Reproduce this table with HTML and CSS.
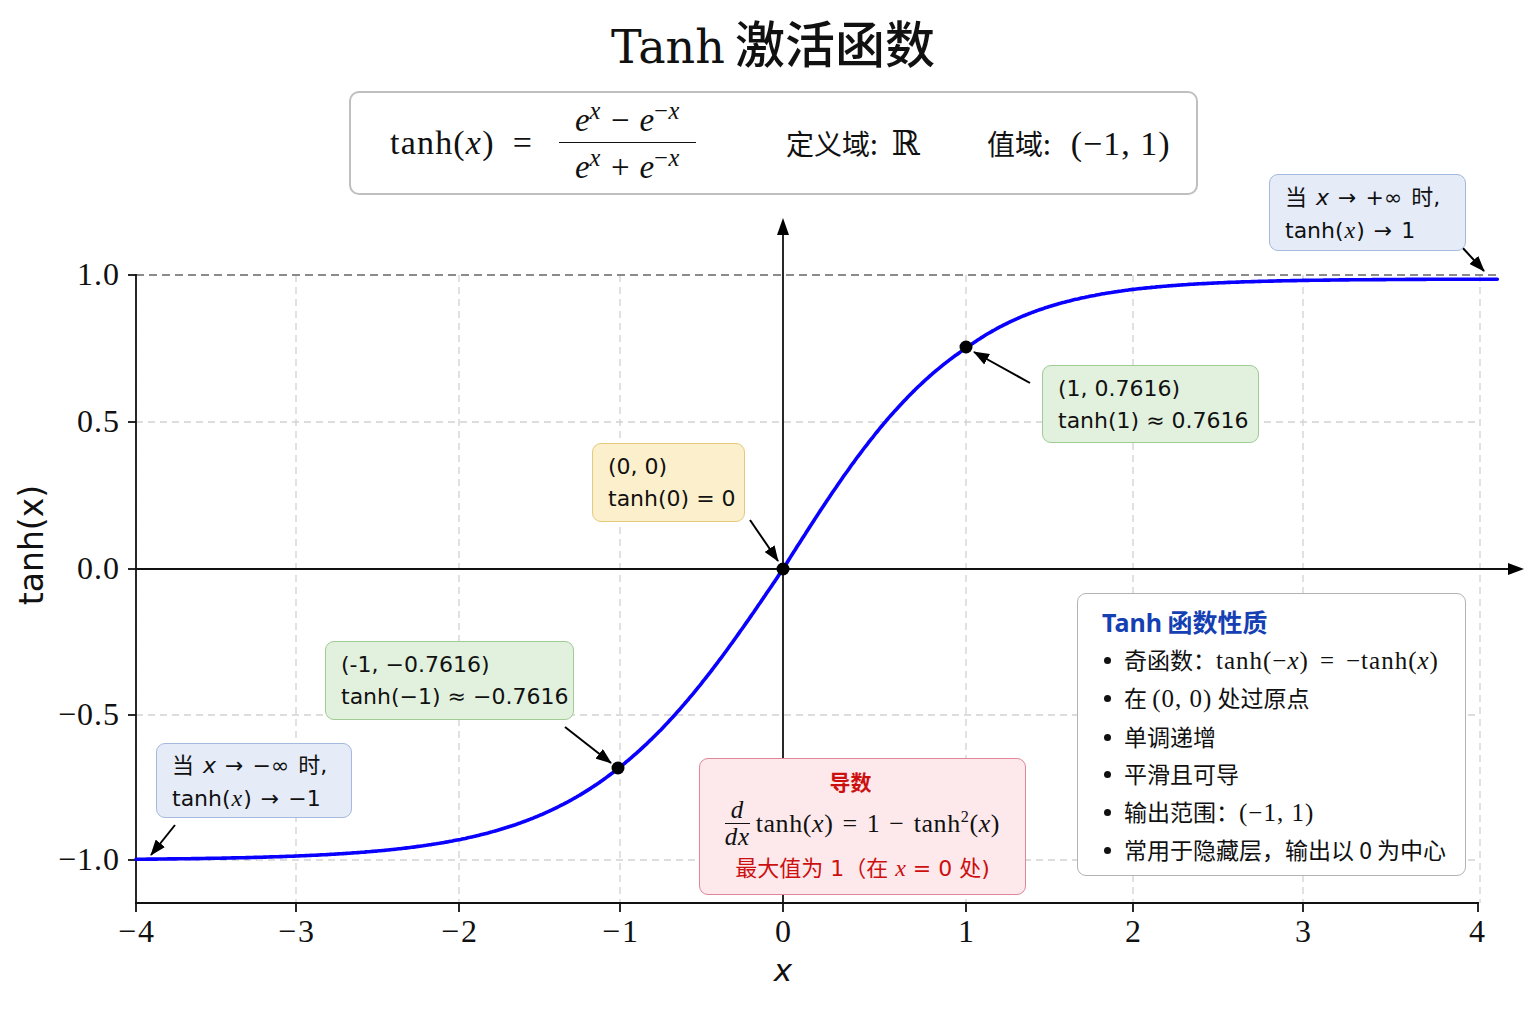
FILE: index.html
```html
<!DOCTYPE html>
<html lang="zh">
<head>
<meta charset="utf-8">
<title>Tanh 激活函数</title>
<link rel="stylesheet" href="styles.css">
</head>
<body>
<div class="page">
  <div class="chart">
    <svg class="plot" width="1536" height="1024" viewBox="0 0 1536 1024" xmlns="http://www.w3.org/2000/svg">
      <defs>
        <marker id="ah" viewBox="0 0 16 12" refX="15" refY="6" markerWidth="16" markerHeight="12" markerUnits="userSpaceOnUse" orient="auto">
          <path d="M0 0 L16 6 L0 12 Z" fill="#000"/>
        </marker>
      </defs>
      <g class="grid">
        <line x1="136" y1="275" x2="136" y2="903"/>
        <line x1="296" y1="275" x2="296" y2="903"/>
        <line x1="459" y1="275" x2="459" y2="903"/>
        <line x1="620" y1="275" x2="620" y2="903"/>
        <line x1="966" y1="275" x2="966" y2="903"/>
        <line x1="1133" y1="275" x2="1133" y2="903"/>
        <line x1="1303" y1="275" x2="1303" y2="903"/>
        <line x1="1480" y1="275" x2="1480" y2="903"/>
        <line x1="136" y1="422" x2="1480" y2="422"/>
        <line x1="136" y1="715" x2="1480" y2="715"/>
        <line x1="136" y1="860" x2="1480" y2="860"/>
      </g>
      <line class="asym" x1="136" y1="275" x2="1497" y2="275"/>
      <g class="spine">
        <line x1="136" y1="274" x2="136" y2="903"/>
        <line x1="135" y1="903" x2="1479" y2="903"/>
        <line x1="128" y1="275" x2="136" y2="275"/>
        <line x1="128" y1="422" x2="136" y2="422"/>
        <line x1="128" y1="569" x2="136" y2="569"/>
        <line x1="128" y1="715" x2="136" y2="715"/>
        <line x1="128" y1="860" x2="136" y2="860"/>
        <line x1="136" y1="903" x2="136" y2="912"/>
        <line x1="296" y1="903" x2="296" y2="912"/>
        <line x1="459" y1="903" x2="459" y2="912"/>
        <line x1="620" y1="903" x2="620" y2="912"/>
        <line x1="783" y1="903" x2="783" y2="912"/>
        <line x1="966" y1="903" x2="966" y2="912"/>
        <line x1="1133" y1="903" x2="1133" y2="912"/>
        <line x1="1303" y1="903" x2="1303" y2="912"/>
        <line x1="1478" y1="903" x2="1478" y2="912"/>
      </g>
      <g class="axes">
        <line x1="136" y1="569" x2="1510" y2="569"/>
        <line x1="783" y1="903" x2="783" y2="232"/>
      </g>
      <path class="axhead" d="M1524 569 L1508 563 L1508 575 Z"/>
      <path class="axhead" d="M783 218 L777 235 L789 235 Z"/>
      <path id="curve" class="curve" d="M136 860 L1497 279"/>
      <g class="dots">
        <circle cx="783" cy="569" r="6.5"/>
        <circle cx="966" cy="347" r="6.5"/>
        <circle cx="618" cy="768" r="6.5"/>
      </g>
      <g class="arrows">
        <line x1="1461" y1="246" x2="1484" y2="271" marker-end="url(#ah)"/>
        <line x1="1030" y1="383" x2="974" y2="352" marker-end="url(#ah)"/>
        <line x1="750" y1="520" x2="778" y2="561" marker-end="url(#ah)"/>
        <line x1="565" y1="727" x2="611" y2="763" marker-end="url(#ah)"/>
        <line x1="175" y1="825" x2="151" y2="855" marker-end="url(#ah)"/>
      </g>
      <g class="ticklabel ylab">
        <text x="120" y="285">1.0</text>
        <text x="120" y="432">0.5</text>
        <text x="120" y="579">0.0</text>
        <text x="120" y="725">−0.5</text>
        <text x="120" y="870">−1.0</text>
      </g>
      <g class="ticklabel xlab">
        <text x="137" y="942">−4</text>
        <text x="297" y="942">−3</text>
        <text x="460" y="942">−2</text>
        <text x="621" y="942">−1</text>
        <text x="784" y="942">0</text>
        <text x="967" y="942">1</text>
        <text x="1134" y="942">2</text>
        <text x="1304" y="942">3</text>
        <text x="1478" y="942">4</text>
      </g>
      <text class="axlabel xname" x="783" y="981">x</text>
      <text class="axlabel yname" x="0" y="0" transform="translate(43 545) rotate(-90)">tanh(x)</text>
    </svg>

    <div class="note blue n-top">
      <div>当 <i class="si">x</i> → +∞ 时,</div>
      <div>tanh(<i class="mi">x</i>) → 1</div>
    </div>
    <div class="note green n-p1">
      <div>(1, 0.7616)</div>
      <div>tanh(1) ≈ 0.7616</div>
    </div>
    <div class="note yellow n-p0">
      <div>(0, 0)</div>
      <div>tanh(0) = 0</div>
    </div>
    <div class="note green n-m1">
      <div>(-1, −0.7616)</div>
      <div>tanh(−1) ≈ −0.7616</div>
    </div>
    <div class="note blue n-inf">
      <div>当 <i class="si">x</i> → −∞ 时,</div>
      <div>tanh(<i class="mi">x</i>) → −1</div>
    </div>

    <div class="deriv">
      <div class="d-title">导数</div>
      <div class="d-formula m">
        <span class="frac small"><span class="num"><i>d</i></span><span class="den"><i>dx</i></span></span>
        <span class="dexpr">tanh(<i>x</i>)<span class="op">=</span>1<span class="op">−</span>tanh<sup>2</sup>(<i>x</i>)</span>
      </div>
      <div class="d-note">最大值为 1（在 <i class="mi">x</i> = 0 处)</div>
    </div>

    <div class="props">
      <div class="p-title"><span class="p-lat">Tanh</span> 函数性质</div>
      <ul class="p-list">
        <li>奇函数：<span class="m">tanh(−<i>x</i>)<span class="op">=</span>−tanh(<i>x</i>)</span></li>
        <li>在 <span class="m">(0, 0)</span> 处过原点</li>
        <li>单调递增</li>
        <li>平滑且可导</li>
        <li>输出范围：<span class="m">(−1, 1)</span></li>
        <li>常用于隐藏层，输出以 0 为中心</li>
      </ul>
    </div>
  </div>

  <header class="head">
    <h1 class="title"><span class="t-lat">Tanh</span> <span class="t-cjk">激活函数</span></h1>
    <div class="formula-box">
      <span class="m lhs">tanh(<i>x</i>)</span>
      <span class="m eq">=</span>
      <span class="frac big m">
        <span class="num"><i>e</i><sup><i>x</i></sup><span class="op">−</span><i>e</i><sup>−<i>x</i></sup></span>
        <span class="den"><i>e</i><sup><i>x</i></sup><span class="op">+</span><i>e</i><sup>−<i>x</i></sup></span>
      </span>
      <span class="cj dom">定义域:<span class="m">ℝ</span></span>
      <span class="cj rng">值域:<span class="m">(−1, 1)</span></span>
    </div>
  </header>
</div>
<script src="script.js"></script>
</body>
</html>
```

FILE: styles.css
```css
html, body {
  margin: 0;
  padding: 0;
  background: #ffffff;
}

.page {
  position: relative;
  width: 1536px;
  height: 1024px;
  overflow: hidden;
  background: #ffffff;
  font-family: "DejaVu Sans", "Noto Sans CJK SC", sans-serif;
  color: #111;
}

/* ---------- header ---------- */
.head {
  position: relative;
  z-index: 2;
  padding-top: 13px;
}

.title {
  margin: 0;
  height: 56px;
  line-height: 56px;
  text-align: center;
  padding-left: 10px;
  font-weight: 400;
  color: #111;
  white-space: nowrap;
}

.t-lat {
  font-family: "DejaVu Serif", serif;
  font-size: 46px;
}

.t-cjk {
  font-family: "Noto Sans CJK SC", sans-serif;
  font-size: 50px;
  font-weight: 500;
}

.formula-box {
  box-sizing: border-box;
  margin: 22px 0 0 349px;
  width: 849px;
  height: 104px;
  border: 2px solid #bfbfbf;
  border-radius: 10px;
  background: #fff;
  display: flex;
  align-items: center;
  padding-left: 39px;
}

.m {
  font-family: "Liberation Serif", "DejaVu Serif", serif;
}

.m i, i.mi {
  font-family: "Liberation Serif", "DejaVu Serif", serif;
  font-style: italic;
}

i.si {
  font-family: "DejaVu Sans", sans-serif;
  font-style: italic;
}

.lhs {
  font-size: 34px;
  letter-spacing: 1.2px;
}

.eq {
  font-size: 34px;
  margin-left: 18px;
  margin-right: 27px;
}

.frac {
  display: inline-flex;
  flex-direction: column;
  align-items: center;
}

.frac .num, .frac .den {
  white-space: nowrap;
  display: block;
  text-align: center;
}

.frac.big {
  font-size: 33px;
  width: 137px;
}

.frac.big .op {
  margin: 0 10px;
}

.frac.big .num {
  width: 100%;
  border-bottom: 1.5px solid #111;
  padding-bottom: 4px;
  line-height: 36px;
}

.frac.big .den {
  line-height: 36px;
  padding-top: 6px;
}

.frac.big sup {
  font-size: 0.74em;
  vertical-align: 0.5em;
  line-height: 0;
  letter-spacing: 0.5px;
}

.cj {
  font-family: "Noto Sans CJK SC", sans-serif;
  font-size: 28px;
  white-space: nowrap;
}

.cj .m {
  font-size: 34px;
  letter-spacing: 1px;
}

.dom {
  margin-left: 90px;
}

.dom .m {
  margin-left: 14px;
}

.rng {
  margin-left: 66px;
}

.rng .m {
  margin-left: 20px;
}

/* ---------- chart ---------- */
.chart {
  position: absolute;
  left: 0;
  top: 0;
  width: 1536px;
  height: 1024px;
  z-index: 1;
}

.plot {
  display: block;
}

.grid line {
  stroke: #d2d2d2;
  stroke-width: 1.3;
  stroke-dasharray: 7 5;
}

.asym {
  stroke: #666;
  stroke-width: 1.6;
  stroke-dasharray: 8 5;
}

.spine line {
  stroke: #111;
  stroke-width: 1.8;
}

.axes line {
  stroke: #111;
  stroke-width: 1.8;
}

.axhead {
  fill: #000;
}

.curve {
  fill: none;
  stroke: #0a00ff;
  stroke-width: 3.6;
  stroke-linejoin: round;
  stroke-linecap: round;
}

.dots circle {
  fill: #000;
}

.arrows line {
  stroke: #000;
  stroke-width: 2;
}

.ticklabel text {
  font-family: "Liberation Serif", "DejaVu Serif", serif;
  font-size: 32px;
  fill: #111;
}

.ylab text {
  text-anchor: end;
  letter-spacing: 1px;
}

.xlab text {
  text-anchor: middle;
  letter-spacing: 2px;
}

.axlabel {
  font-family: "DejaVu Sans", sans-serif;
  font-size: 33px;
  fill: #111;
  text-anchor: middle;
}

.xname {
  font-style: italic;
  font-size: 31px;
}

/* ---------- notes ---------- */
.note {
  position: absolute;
  box-sizing: border-box;
  border: 1.5px solid;
  border-radius: 9px;
  padding: 7px 0 0 15px;
  font-size: 22px;
  line-height: 32px;
  white-space: nowrap;
  color: #111;
}

.note i.mi {
  font-size: 24px;
  padding: 0 1px;
}

.note.blue {
  background: #e5ecf8;
  border-color: #a4b9de;
}

.note.green {
  background: #e2f1de;
  border-color: #9fcb95;
}

.note.yellow {
  background: #fcf0cc;
  border-color: #e4ca7c;
}

.n-top { left: 1269px; top: 174px; width: 197px; height: 77px; }
.n-p1  { left: 1042px; top: 365px; width: 217px; height: 78px; }
.n-p0  { left: 592px;  top: 443px; width: 153px; height: 79px; }
.n-m1  { left: 325px;  top: 641px; width: 249px; height: 79px; }
.n-inf { left: 156px;  top: 743px; width: 196px; height: 75px; padding-top: 6px; }

.n-top div, .n-inf div {
  word-spacing: 2px;
}

/* ---------- derivative box ---------- */
.deriv {
  position: absolute;
  left: 699px;
  top: 758px;
  width: 327px;
  height: 137px;
  box-sizing: border-box;
  border: 1.5px solid #df8699;
  border-radius: 9px;
  background: #fde9ec;
  display: flex;
  flex-direction: column;
  align-items: center;
  padding-top: 8px;
}

.d-title {
  font-family: "Noto Sans CJK SC", sans-serif;
  font-weight: 700;
  font-size: 21px;
  line-height: 28px;
  color: #cc1010;
  margin-left: -24px;
}

.d-formula {
  display: flex;
  align-items: center;
  font-size: 26px;
  height: 58px;
  white-space: nowrap;
  letter-spacing: 0.6px;
}

.d-formula .op {
  margin: 0 9px;
}

.frac.small {
  margin-right: 6px;
  font-size: 25px;
}

.frac.small .num {
  line-height: 24px;
  padding: 0 2px 1px;
  border-bottom: 1.3px solid #111;
  width: 100%;
  box-sizing: border-box;
}

.frac.small .den {
  line-height: 26px;
}

.d-formula sup {
  font-size: 0.62em;
  vertical-align: 0.6em;
  line-height: 0;
}

.d-note {
  font-family: "DejaVu Sans", "Noto Sans CJK SC", sans-serif;
  font-size: 22px;
  line-height: 30px;
  color: #cc1010;
  white-space: nowrap;
}

.d-note i.mi {
  font-size: 24px;
}

/* ---------- properties box ---------- */
.props {
  position: absolute;
  left: 1077px;
  top: 593px;
  width: 389px;
  height: 283px;
  box-sizing: border-box;
  border: 1.5px solid #b3b3b3;
  border-radius: 9px;
  background: #fff;
  padding: 12px 0 0 24px;
}

.p-title {
  font-family: "Noto Sans CJK SC", sans-serif;
  font-weight: 700;
  font-size: 25px;
  line-height: 30px;
  color: #1540b3;
  white-space: nowrap;
}

.p-lat {
  font-family: "Noto Sans", sans-serif;
}

.p-list {
  list-style: none;
  margin: 4px 0 0;
  padding: 0;
}

.p-list li {
  position: relative;
  font-family: "Noto Sans CJK SC", sans-serif;
  font-size: 23px;
  line-height: 37.4px;
  padding-left: 22px;
  white-space: nowrap;
  color: #111;
}

.p-list li::before {
  content: "";
  position: absolute;
  left: 2px;
  top: 16px;
  width: 7px;
  height: 7px;
  border-radius: 50%;
  background: #111;
}

.p-list .m {
  font-size: 25px;
  letter-spacing: 1px;
}

.p-list .op {
  margin: 0 11px;
}
```

FILE: script.js
```js
(function () {
  var XT = [136, 296, 459, 620, 783, 966, 1133, 1303, 1478];
  function X(x) {
    var i = Math.floor(x) + 4;
    if (i < 0) i = 0;
    if (i > 7) i = 7;
    var f = x - (i - 4);
    return XT[i] + (XT[i + 1] - XT[i]) * f;
  }
  function Y(x) {
    if (x >= 0) return 569 - 290 * Math.tanh(x);
    return 569 - 291 * Math.tanh(0.83 * x);
  }
  var d = '';
  var n = 811;
  for (var k = 0; k <= n; k++) {
    var x = -4 + k * 0.01;
    d += (k ? 'L' : 'M') + X(x).toFixed(1) + ' ' + Y(x).toFixed(1);
  }
  var el = document.getElementById('curve');
  if (el) el.setAttribute('d', d);
})();
```
